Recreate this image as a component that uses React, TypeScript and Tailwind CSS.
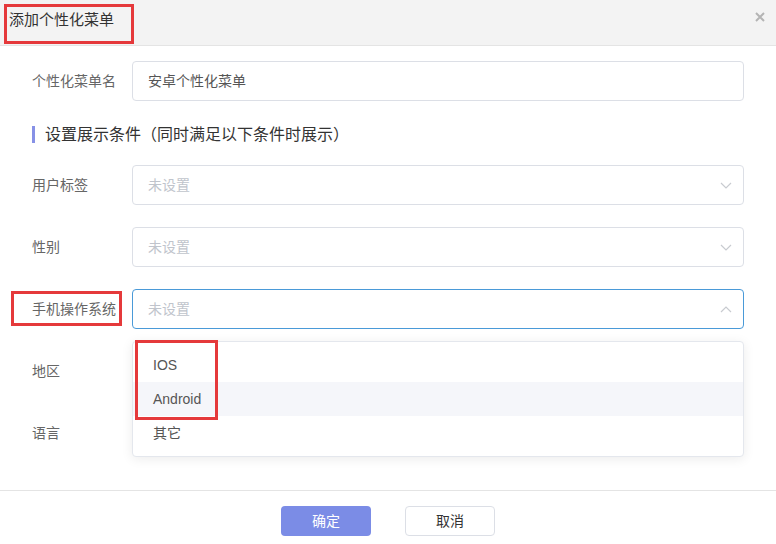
import React from 'react'

const FONT = '"Liberation Sans", Arial, "Noto Sans CJK SC", sans-serif'

const Chevron = ({ up = false }: { up?: boolean }) => (
  <svg width="12" height="7" viewBox="0 0 12 7" fill="none" className="shrink-0">
    <polyline
      points={up ? '1,6 6,1 11,6' : '1,1 6,6 11,1'}
      stroke="#c8cbd0"
      strokeWidth="1.2"
    />
  </svg>
)

const Row = ({ label, children }: { label: React.ReactNode; children?: React.ReactNode }) => (
  <div className="flex items-center h-[40px]">
    <div className="w-[100px] shrink-0 text-[14px] text-[#666]">{label}</div>
    <div className="flex-1 relative h-full">{children}</div>
  </div>
)

const Select = ({ open = false }: { open?: boolean }) => (
  <div
    className={
      'h-full flex items-center justify-between pl-[15px] pr-[11px] rounded-[4px] border ' +
      (open ? 'border-[#4a9ad8]' : 'border-[#dcdfe6]')
    }
  >
    <span className="text-[14px] text-[#c0c4cc]">未设置</span>
    <Chevron up={open} />
  </div>
)

export default function App() {
  return (
    <div className="w-[776px] h-[544px] bg-white flex flex-col overflow-hidden" style={{ fontFamily: FONT }}>
      {/* header */}
      <header className="h-[46px] shrink-0 bg-[#f3f3f3] border-b border-[#e4e4e4] flex items-start justify-between">
        <div className="mt-[4px] ml-[4px] w-[130px] h-[40px] border-[3px] border-[#e5393b] pl-[2px] pt-[2px] text-[15px] text-[#333] leading-[22px]">
          添加个性化菜单
        </div>
        <svg width="10" height="10" viewBox="0 0 10 10" className="mt-[12px] mr-[11px]">
          <path d="M1 1 L9 9 M9 1 L1 9" stroke="#b4b4b4" strokeWidth="2" />
        </svg>
      </header>

      {/* body */}
      <main className="flex-1 pl-[32px] pr-[32px] pt-[15px]">
        <Row label="个性化菜单名">
          <div className="h-full flex items-center pl-[15px] rounded-[4px] border border-[#dcdfe6] text-[14px] text-[#555]">
            安卓个性化菜单
          </div>
        </Row>

        <div className="flex items-center gap-[10px] mt-[25px] h-[17px]">
          <div className="w-[3px] h-[17px] bg-[#8791e6]" />
          <span className="text-[16px] text-[#333]">设置展示条件（同时满足以下条件时展示）</span>
        </div>

        <div className="mt-[22px] flex flex-col gap-[22px]">
          <Row label="用户标签">
            <Select />
          </Row>
          <Row label="性别">
            <Select />
          </Row>
          <Row
            label={
              <div className="relative">
                手机操作系统
                <div className="absolute left-[-21px] top-[-8px] w-[111px] h-[35px] border-[3px] border-[#e5393b]" />
              </div>
            }
          >
            <Select open />
            {/* dropdown */}
            <div className="absolute z-10 left-0 right-0 top-[52px] bg-white rounded-[4px] border border-[#e4e7ed] shadow-[0_2px_12px_rgba(0,0,0,0.08)] py-[6px] text-[14px] text-[#555]">
              <div className="h-[34px] flex items-center pl-[20px]">IOS</div>
              <div className="h-[34px] flex items-center pl-[20px] bg-[#f5f6fa]">Android</div>
              <div className="h-[34px] flex items-center pl-[20px]">其它</div>
              <div className="absolute left-[2px] top-[-2px] w-[83px] h-[80px] border-[3px] border-[#e5393b]" />
            </div>
          </Row>
          <Row label="地区" />
          <Row label="语言" />
        </div>
      </main>

      {/* footer */}
      <footer className="h-[54px] shrink-0 border-t border-[#e4e4e4] flex items-start justify-center gap-[34px] pt-[15px]">
        <button className="w-[90px] h-[30px] rounded-[4px] bg-[#7b8ce6] text-white text-[14px]">确定</button>
        <button className="w-[90px] h-[30px] rounded-[4px] border border-[#dcdfe6] bg-white text-[#333] text-[14px]">取消</button>
      </footer>
    </div>
  )
}
